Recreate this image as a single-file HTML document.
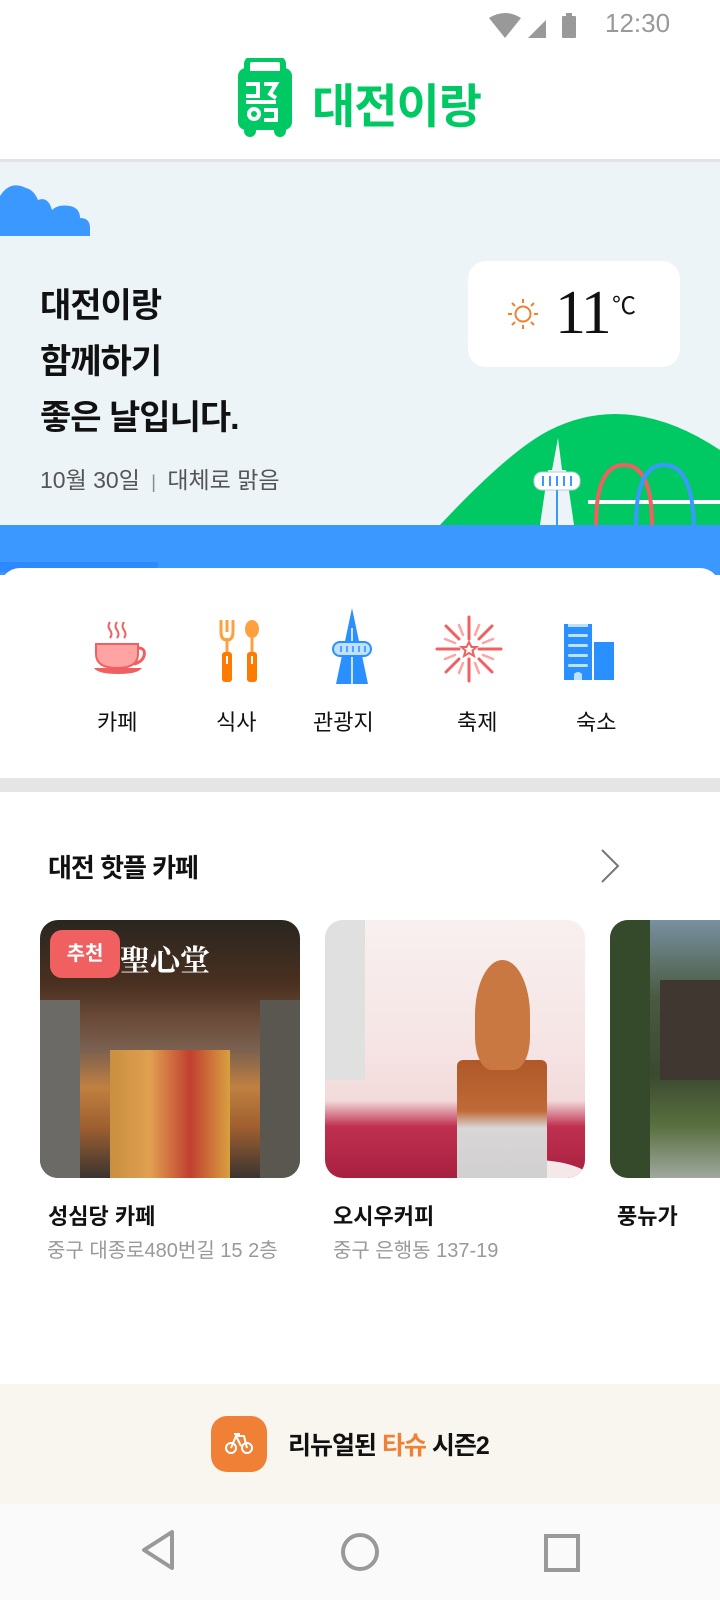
<!DOCTYPE html>
<html><head><meta charset="utf-8"><style>
*{margin:0;padding:0;box-sizing:border-box}
body{width:720px;height:1600px;overflow:hidden;background:#fff;font-family:"Liberation Sans","Noto Sans CJK KR",sans-serif;position:relative;color:#111}
.abs{position:absolute}
</style></head><body>
<!-- status bar -->
<div class="abs" style="left:488px;top:12px">
<svg width="100" height="28" viewBox="0 0 100 28">
<path d="M1 6 Q17 -4 33 6 L17 26 Z" fill="#999"/>
<path d="M40 26 L58 8 L58 26 Z" fill="#999"/>
<rect x="74" y="4" width="14" height="22" rx="1" fill="#999"/><rect x="78" y="1" width="6" height="4" fill="#999"/>
</svg></div>
<div class="abs" style="left:605px;top:8px;font-size:26px;color:#999">12:30</div>
<!-- header -->
<div class="abs" style="left:238px;top:58px">
<svg width="54" height="80" viewBox="0 0 54 80">
<rect x="0" y="10" width="54" height="62" rx="8" fill="#00c963"/>
<rect x="9" y="1" width="36" height="16" rx="5" fill="none" stroke="#00c963" stroke-width="6"/>
<circle cx="12" cy="73" r="6" fill="#00c963"/><circle cx="42" cy="73" r="6" fill="#00c963"/>
<rect x="12" y="9" width="30" height="4" fill="#fff"/>
<g fill="none" stroke="#fff" stroke-width="4"><path d="M8 26h12v12h-12M26 26h12l-6 10l6 4M8 44h30"/><circle cx="16" cy="56" r="5"/><path d="M26 52h12v10h-12"/></g>
</svg></div>
<div class="abs" style="left:312px;top:68px;font-size:47px;font-weight:bold;color:#00c963;letter-spacing:-1px">대전이랑</div>
<div class="abs" style="left:0;top:159px;width:720px;height:3px;background:#e3e3e3"></div>
<!-- hero -->
<div class="abs" style="left:0;top:162px;width:720px;height:363px;background:#edf4f8"></div>
<svg class="abs" style="left:0;top:180px" width="92" height="56" viewBox="0 0 92 56"><path d="M0 56 L0 16 Q10 0 26 8 Q34 10 38 20 Q48 16 52 30 Q58 24 70 26 Q80 28 80 38 Q90 38 90 48 L90 56 Z" fill="#3a98ff"/></svg>
<div class="abs" style="left:40px;top:278px;font-size:34px;font-weight:bold;line-height:56px;letter-spacing:-1px">대전이랑<br>함께하기<br>좋은 날입니다.</div>
<div class="abs" style="left:40px;top:461px;font-size:23px;color:#555">10월 30일 <span style="color:#888;font-size:18px">&nbsp;|&nbsp;</span> 대체로 맑음</div>
<div class="abs" style="left:468px;top:261px;width:212px;height:106px;background:#fff;border-radius:18px"></div>
<svg class="abs" style="left:506px;top:297px" width="34" height="34" viewBox="0 0 34 34"><circle cx="17" cy="17" r="7.5" fill="none" stroke="#f08030" stroke-width="2"/><g stroke="#f08030" stroke-width="2"><path d="M17 2v4M17 28v4M2 17h4M28 17h4M6 6l3 3M25 25l3 3M6 28l3-3M25 9l3-3"/></g></svg>
<div class="abs" style="left:555px;top:278px;font-family:'Liberation Serif',serif;font-size:62px;letter-spacing:-3px">11</div>
<div class="abs" style="left:612px;top:286px;font-size:24px">℃</div>
<svg class="abs" style="left:430px;top:410px" width="290" height="115" viewBox="0 0 290 115">
<path d="M10 115 Q80 40 120 20 Q200 -20 290 40 L290 115 Z" fill="#00c963"/>
<path d="M110 115 L118 60 L122 60 L128 28 L132 60 L136 60 L144 115 Z" fill="#edf4f8"/>
<rect x="104" y="62" width="46" height="18" rx="8" fill="#fff" stroke="#bcd" stroke-width="1"/>
<g stroke="#3a98ff" stroke-width="2"><path d="M113 66v10M120 66v10M127 66v10M134 66v10M141 66v10M127 80v35"/></g>
<path d="M158 92 L290 92" stroke="#fff" stroke-width="4"/>
<path d="M166 115 Q166 55 194 55 Q222 55 222 115" fill="none" stroke="#f06060" stroke-width="4"/>
<path d="M206 115 Q206 55 234 55 Q262 55 264 115" fill="none" stroke="#3a98ff" stroke-width="4"/>
</svg>
<div class="abs" style="left:0;top:525px;width:720px;height:50px;background:#3a98ff"></div>
<div class="abs" style="left:0;top:562px;width:158px;height:10px;background:#2e88ff"></div>
<div class="abs" style="left:0;top:568px;width:720px;height:220px;background:#fff;border-radius:20px 20px 0 0"></div>
<!-- category icons -->
<svg class="abs" style="left:90px;top:620px" width="60" height="60" viewBox="0 0 60 60">
<path d="M20 2q-3 4 0 8q3 4 0 8M27 2q-3 4 0 8q3 4 0 8M34 2q-3 4 0 8q3 4 0 8" fill="none" stroke="#f06060" stroke-width="2"/>
<path d="M6 24h42v10q0 14-21 14q-21 0-21-14z" fill="#ffa3a3" stroke="#f06060" stroke-width="2"/>
<path d="M48 28q8 0 6 8q-2 6-10 8" fill="none" stroke="#f06060" stroke-width="3"/>
<path d="M4 48h48q-4 6-24 6q-20 0-24-6z" fill="#f06060"/></svg>
<svg class="abs" style="left:218px;top:620px" width="44" height="62" viewBox="0 0 44 62">
<path d="M3 0v12q0 8 6 8q6 0 6-8V0M9 0v12" fill="none" stroke="#ffa040" stroke-width="3"/>
<rect x="7.5" y="18" width="3" height="16" fill="#ffa040"/><rect x="4" y="32" width="10" height="30" rx="3" fill="#ff7a00"/>
<ellipse cx="34" cy="9" rx="7" ry="9" fill="#ffa040"/><rect x="32.5" y="16" width="3" height="18" fill="#ffa040"/><rect x="29" y="32" width="10" height="30" rx="3" fill="#ff7a00"/>
<rect x="8" y="36" width="2" height="8" fill="#fff"/><rect x="33" y="36" width="2" height="8" fill="#fff"/></svg>
<svg class="abs" style="left:330px;top:608px" width="44" height="76" viewBox="0 0 44 76">
<path d="M22 0 L38 76 L6 76 Z" fill="#2a90ff"/><path d="M22 20 L22 76" stroke="#fff" stroke-width="1.5"/>
<rect x="3" y="34" width="38" height="14" rx="7" fill="#bfe0ff" stroke="#2a90ff" stroke-width="2"/>
<g stroke="#2a90ff" stroke-width="1.5"><path d="M11 38v6M17 38v6M23 38v6M29 38v6M35 38v6"/></g></svg>
<svg class="abs" style="left:435px;top:615px" width="68" height="68" viewBox="0 0 68 68">
<g stroke="#f06060" stroke-width="3" stroke-linecap="round"><path d="M34 2v22M34 44v22M2 34h22M44 34h22M11 11l13 13M44 44l13 13M11 57l13-13M44 24l13-13"/></g>
<g stroke="#ffa3a3" stroke-width="2.5" stroke-linecap="round"><path d="M24 10l4 10M44 10l-4 10M24 58l4-10M44 58l-4-10M10 24l10 4M10 44l10-4M58 24l-10 4M58 44l-10-4"/></g>
<path d="M34 27l2.5 5h5l-4 3.5 1.5 5.5-5-3-5 3 1.5-5.5-4-3.5h5z" fill="none" stroke="#f06060" stroke-width="2"/></svg>
<svg class="abs" style="left:564px;top:624px" width="50" height="56" viewBox="0 0 50 56">
<rect x="0" y="0" width="28" height="56" fill="#2a90ff"/><rect x="30" y="18" width="20" height="38" fill="#2a90ff"/>
<rect x="4" y="0" width="20" height="3" fill="#bfe0ff"/>
<g fill="#bfe0ff"><rect x="4" y="10" width="20" height="3" rx="1.5"/><rect x="4" y="20" width="20" height="3" rx="1.5"/><rect x="4" y="30" width="20" height="3" rx="1.5"/><rect x="4" y="40" width="20" height="3" rx="1.5"/></g>
<path d="M10 56v-6q4-4 8 0v6" fill="#bfe0ff"/></svg>
<div class="abs" style="top:705px;left:0;width:720px;font-size:22px;color:#111">
<span class="abs" style="left:97px">카페</span><span class="abs" style="left:216px">식사</span><span class="abs" style="left:313px">관광지</span><span class="abs" style="left:457px">축제</span><span class="abs" style="left:576px">숙소</span></div>
<div class="abs" style="left:0;top:778px;width:720px;height:14px;background:#e5e5e5"></div>
<!-- section -->
<div class="abs" style="left:48px;top:848px;font-size:26px;font-weight:bold;letter-spacing:-1px">대전 핫플 카페</div>
<svg class="abs" style="left:600px;top:848px" width="20" height="36" viewBox="0 0 20 36"><path d="M2 2 L18 18 L2 34" fill="none" stroke="#777" stroke-width="2"/></svg>
<div class="abs" style="left:40px;top:920px;width:260px;height:258px;border-radius:18px;overflow:hidden;background:linear-gradient(180deg,#2a2620 0%,#4a3020 25%,#6a4a38 38%,#7a6050 50%,#c08040 65%,#a06030 80%,#3a3430 100%)">
<div style="position:absolute;left:70px;top:130px;width:120px;height:128px;background:linear-gradient(90deg,#c89040,#e0a050,#c04030,#d8a040)"></div>
<div style="position:absolute;left:0;top:80px;width:40px;height:178px;background:#6c6a66"></div>
<div style="position:absolute;left:220px;top:80px;width:40px;height:178px;background:#5a5650"></div>
<div style="position:absolute;left:80px;top:16px;font-size:30px;color:#fff;font-family:'Noto Serif CJK SC',serif;font-weight:bold">聖心堂</div>
</div>
<div class="abs" style="left:50px;top:930px;width:70px;height:48px;border-radius:12px;background:#f06060;color:#fff;font-size:20px;font-weight:bold;text-align:center;line-height:48px">추천</div>
<div class="abs" style="left:325px;top:920px;width:260px;height:258px;border-radius:18px;overflow:hidden;background:linear-gradient(180deg,#f8f0f0 0%,#f6e4e4 50%,#f2dada 70%,#c03050 80%,#a82040 100%)">
<div style="position:absolute;left:0;top:0;width:40px;height:160px;background:#e0e0e0"></div>
<div style="position:absolute;left:145px;top:240px;width:130px;height:60px;border-radius:50%;background:#f4e8e8"></div>
<div style="position:absolute;left:132px;top:140px;width:90px;height:170px;border-radius:6px;background:linear-gradient(180deg,#b05828 0%,#c06a38 30%,#d8d6d6 40%,#cacaca 100%)"></div>
<div style="position:absolute;left:150px;top:40px;width:55px;height:110px;border-radius:50% 50% 30% 30%;background:#c87840"></div>
</div>
<div class="abs" style="left:610px;top:920px;width:110px;height:258px;border-radius:18px 0 0 18px;overflow:hidden;background:linear-gradient(180deg,#7890a0 0%,#4a5a40 30%,#3a4a30 60%,#5a7040 80%,#a0a8a0 100%)">
<div style="position:absolute;left:50px;top:60px;width:60px;height:100px;background:#403830"></div>
<div style="position:absolute;left:0;top:0;width:40px;height:258px;background:#354a2a"></div>
</div>
<div class="abs" style="left:48px;top:1199px;font-size:22px;font-weight:bold">성심당 카페</div>
<div class="abs" style="left:47px;top:1234px;font-size:20px;color:#999;white-space:nowrap">중구 대종로480번길 15 2층</div>
<div class="abs" style="left:333px;top:1199px;font-size:22px;font-weight:bold">오시우커피</div>
<div class="abs" style="left:333px;top:1234px;font-size:20px;color:#999">중구 은행동 137-19</div>
<div class="abs" style="left:617px;top:1199px;font-size:22px;font-weight:bold">풍뉴가</div>
<!-- banner -->
<div class="abs" style="left:0;top:1384px;width:720px;height:120px;background:#f8f6ef"></div>
<div class="abs" style="left:211px;top:1416px;width:56px;height:56px;border-radius:16px;background:#f08035"></div>
<svg class="abs" style="left:222px;top:1426px" width="34" height="34" viewBox="0 0 34 34"><g fill="none" stroke="#fff" stroke-width="2"><circle cx="9" cy="22" r="5"/><circle cx="25" cy="22" r="5"/><path d="M9 22l5-12h8l3 12M12 8h6M14 10l5 10"/></g></svg>
<div class="abs" style="left:288px;top:1426px;font-size:25px;font-weight:bold;letter-spacing:-1px">리뉴얼된 <span style="color:#f08035">타슈</span> 시즌2</div>
<!-- nav -->
<div class="abs" style="left:0;top:1504px;width:720px;height:96px;background:#fafafa"></div>
<svg class="abs" style="left:138px;top:1528px" width="40" height="44" viewBox="0 0 40 44"><path d="M34 4 L34 40 L6 22 Z" fill="none" stroke="#999" stroke-width="4" stroke-linejoin="round"/></svg>
<svg class="abs" style="left:338px;top:1530px" width="44" height="44" viewBox="0 0 44 44"><circle cx="22" cy="22" r="17" fill="none" stroke="#999" stroke-width="4"/></svg>
<svg class="abs" style="left:542px;top:1532px" width="40" height="40" viewBox="0 0 40 40"><rect x="4" y="4" width="32" height="34" fill="none" stroke="#999" stroke-width="4"/></svg>
</body></html>
